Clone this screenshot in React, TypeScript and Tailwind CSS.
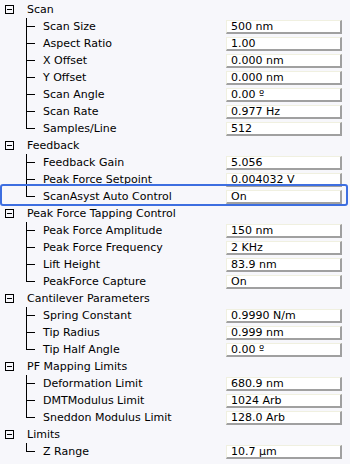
import React from "react";

type Item = { label: string; value: string; highlight?: boolean };
type Group = { title: string; items: Item[] };

const groups: Group[] = [
  {
    title: "Scan",
    items: [
      { label: "Scan Size", value: "500 nm" },
      { label: "Aspect Ratio", value: "1.00" },
      { label: "X Offset", value: "0.000 nm" },
      { label: "Y Offset", value: "0.000 nm" },
      { label: "Scan Angle", value: "0.00 º" },
      { label: "Scan Rate", value: "0.977 Hz" },
      { label: "Samples/Line", value: "512" },
    ],
  },
  {
    title: "Feedback",
    items: [
      { label: "Feedback Gain", value: "5.056" },
      { label: "Peak Force Setpoint", value: "0.004032 V" },
      { label: "ScanAsyst Auto Control", value: "On", highlight: true },
    ],
  },
  {
    title: "Peak Force Tapping Control",
    items: [
      { label: "Peak Force Amplitude", value: "150 nm" },
      { label: "Peak Force Frequency", value: "2 KHz" },
      { label: "Lift Height", value: "83.9 nm" },
      { label: "PeakForce Capture", value: "On" },
    ],
  },
  {
    title: "Cantilever Parameters",
    items: [
      { label: "Spring Constant", value: "0.9990 N/m" },
      { label: "Tip Radius", value: "0.999 nm" },
      { label: "Tip Half Angle", value: "0.00 º" },
    ],
  },
  {
    title: "PF Mapping Limits",
    items: [
      { label: "Deformation Limit", value: "680.9 nm" },
      { label: "DMTModulus Limit", value: "1024 Arb" },
      { label: "Sneddon Modulus Limit", value: "128.0 Arb" },
    ],
  },
  {
    title: "Limits",
    items: [{ label: "Z Range", value: "10.7 µm" }],
  },
];

function Expander() {
  return (
    <svg width="9" height="9" viewBox="0 0 9 9" className="block">
      <rect x="0.5" y="0.5" width="8" height="8" fill="none" stroke="#000" strokeWidth="1" />
      <line x1="2" y1="4.5" x2="7" y2="4.5" stroke="#000" strokeWidth="1" />
    </svg>
  );
}

function Connector({ last }: { last: boolean }) {
  return (
    <svg width="17" height="17" viewBox="0 0 17 17" className="block shrink-0">
      <line x1="0.5" y1="0" x2="0.5" y2={last ? 8.5 : 17} stroke="#000" strokeWidth="1" />
      <line x1="0" y1="8.5" x2="9" y2="8.5" stroke="#000" strokeWidth="1" />
    </svg>
  );
}

export default function App() {
  return (
    <div
      className="w-[350px] h-[464px] bg-[#f7f7fb] overflow-hidden pt-[1px] text-[11px] text-black"
      style={{ fontFamily: '"DejaVu Sans", sans-serif' }}
    >
      {groups.map((g) => (
        <div key={g.title} className="flex flex-col">
          <div className="h-[17px] flex items-center">
            <div className="ml-[5px] w-[9px]">
              <Expander />
            </div>
            <span className="ml-[13px] leading-none whitespace-nowrap">{g.title}</span>
          </div>
          {g.items.map((it, i) => (
            <div key={it.label} className="relative h-[17px] flex items-center">
              <div className="ml-[26px]">
                <Connector last={i === g.items.length - 1} />
              </div>
              <span className="ml-[0px] w-[183px] leading-none whitespace-nowrap">{it.label}</span>
              <div className="w-[116px] h-[14px] bg-white border-t border-l border-[#f0f0e0] border-b-2 border-r-2 border-b-[#a0a0a0] border-r-[#a0a0a0] flex items-center pl-[4px] leading-none whitespace-nowrap">
                {it.value}
              </div>
              {it.highlight && (
                <div className="absolute left-0 right-[2px] top-[-4px] bottom-[-1px] border-2 border-[#3d6ee0] rounded-[3px] pointer-events-none" />
              )}
            </div>
          ))}
        </div>
      ))}
    </div>
  );
}
